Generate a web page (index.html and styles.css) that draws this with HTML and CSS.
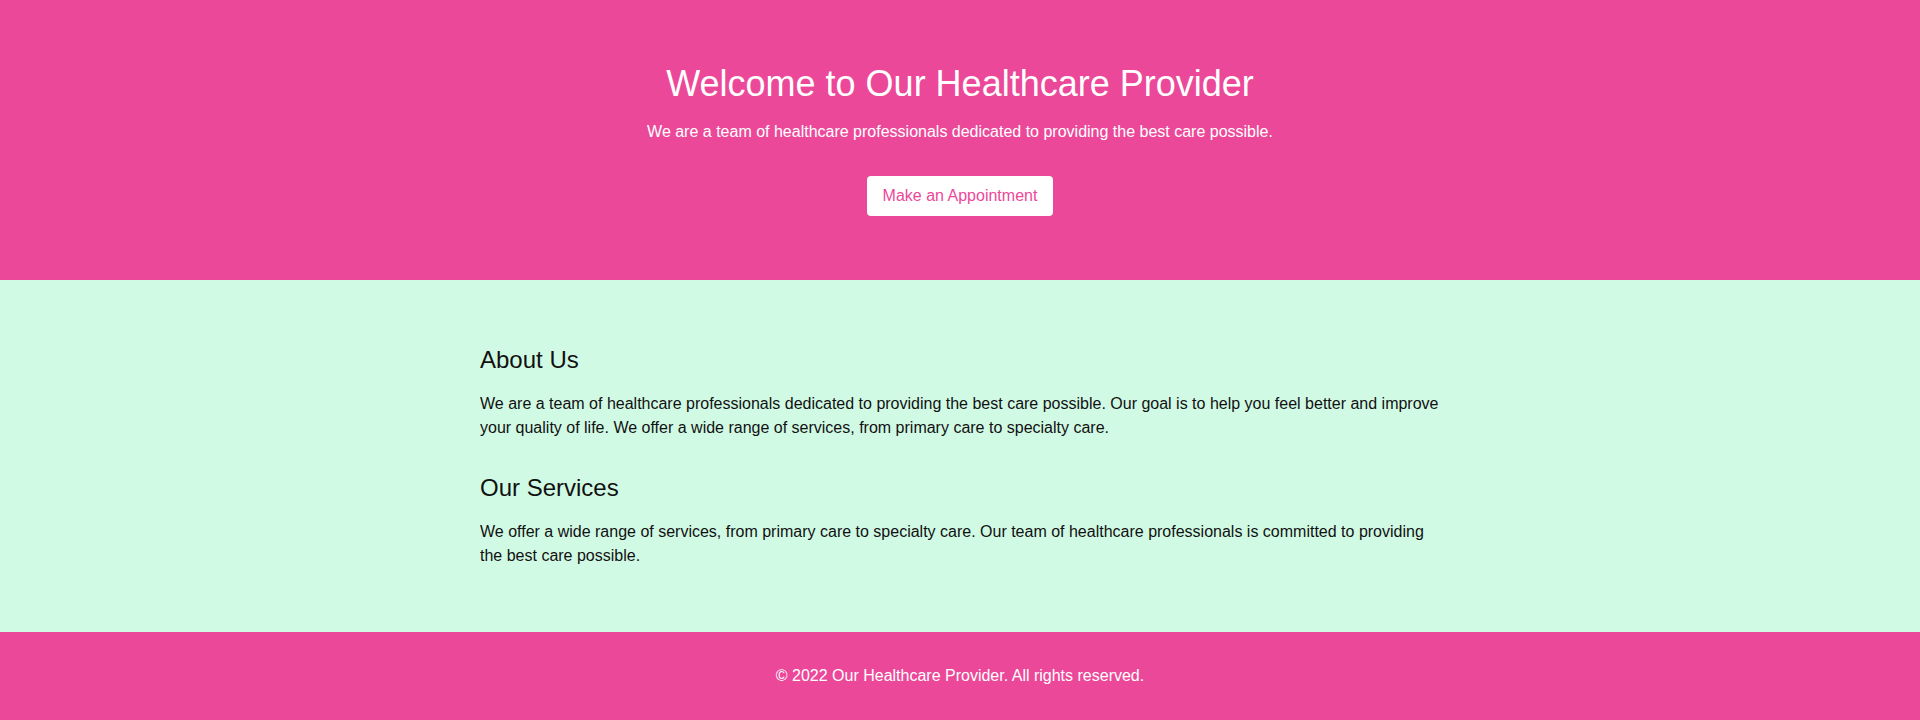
FILE: index.html
```html
<!DOCTYPE html>
<html lang="en">
<head>
<meta charset="utf-8">
<title>Our Healthcare Provider</title>
<link rel="stylesheet" href="styles.css">
</head>
<body>
<header class="hero">
  <h1 class="hero-title">Welcome to Our Healthcare Provider</h1>
  <p class="hero-sub">We are a team of healthcare professionals dedicated to providing the best care possible.</p>
  <a class="btn" href="#">Make an Appointment</a>
</header>
<main class="main">
  <div class="container">
    <section class="section">
      <h2 class="section-title">About Us</h2>
      <p class="section-text">We are a team of healthcare professionals dedicated to providing the best care possible. Our goal is to help you feel better and improve your quality of life. We offer a wide range of services, from primary care to specialty care.</p>
    </section>
    <section class="section">
      <h2 class="section-title">Our Services</h2>
      <p class="section-text">We offer a wide range of services, from primary care to specialty care. Our team of healthcare professionals is committed to providing the best care possible.</p>
    </section>
  </div>
</main>
<footer class="footer">
  <p>&copy; 2022 Our Healthcare Provider. All rights reserved.</p>
</footer>
</body>
</html>
```
FILE: styles.css
```css
* { box-sizing: border-box; }
html, body { margin: 0; padding: 0; }
body {
  font-family: "Liberation Sans", Arial, sans-serif;
  font-size: 16px;
  line-height: 24px;
  color: #111;
}
h1, h2, p { margin: 0; font-weight: 400; }

.hero {
  background: #ec4899;
  color: #fff;
  text-align: center;
  padding: 64px 16px;
  display: flex;
  flex-direction: column;
  align-items: center;
}
.hero-title {
  font-size: 36px;
  line-height: 40px;
  margin-bottom: 16px;
}
.hero-sub {
  margin-bottom: 32px;
}
.btn {
  display: inline-block;
  background: #fff;
  color: #ec4899;
  text-decoration: none;
  padding: 8px 16px;
  border-radius: 4px;
}

.main {
  background: #d1fae5;
  padding: 64px 0;
}
.container {
  max-width: 960px;
  margin: 0 auto;
  display: flex;
  flex-direction: column;
  gap: 32px;
}
.section-title {
  font-size: 24px;
  line-height: 32px;
  margin-bottom: 16px;
}

.footer {
  background: #ec4899;
  color: #fff;
  text-align: center;
  padding: 32px 16px;
}
```
